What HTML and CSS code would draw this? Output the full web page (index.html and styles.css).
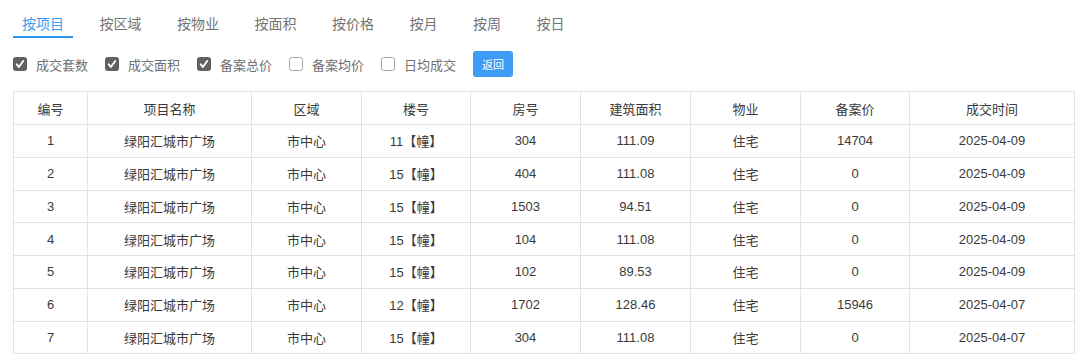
FILE: index.html
```html
<!DOCTYPE html>
<html lang="zh-CN">
<head>
  <meta charset="UTF-8">
  <meta name="viewport" content="width=device-width, initial-scale=1.0">
  <title>成交明细</title>
  <link rel="stylesheet" href="styles.css">
</head>
<body>

  <div class="page">
    <!-- 统计维度 -->
    <div class="tabs">
      <div class="tab active">按项目</div>
      <div class="tab">按区域</div>
      <div class="tab">按物业</div>
      <div class="tab">按面积</div>
      <div class="tab">按价格</div>
      <div class="tab">按月</div>
      <div class="tab">按周</div>
      <div class="tab">按日</div>
    </div>

    <!-- 指标选择 -->
    <div class="filters">
      <label class="check checked"><span class="box"><svg viewBox="0 0 14 14"><path d="M3.7 7.3l2.2 2.7 4.3-6" fill="none" stroke="#fff" stroke-width="1.9" stroke-linecap="round" stroke-linejoin="round"/></svg></span>成交套数</label>
      <label class="check checked"><span class="box"><svg viewBox="0 0 14 14"><path d="M3.7 7.3l2.2 2.7 4.3-6" fill="none" stroke="#fff" stroke-width="1.9" stroke-linecap="round" stroke-linejoin="round"/></svg></span>成交面积</label>
      <label class="check checked"><span class="box"><svg viewBox="0 0 14 14"><path d="M3.7 7.3l2.2 2.7 4.3-6" fill="none" stroke="#fff" stroke-width="1.9" stroke-linecap="round" stroke-linejoin="round"/></svg></span>备案总价</label>
      <label class="check"><span class="box"></span>备案均价</label>
      <label class="check"><span class="box"></span>日均成交</label>
      <button class="back-btn">返回</button>
    </div>

    <table class="deal-table">
      <colgroup>
        <col style="width:74px">
        <col style="width:164px">
        <col style="width:110px">
        <col style="width:109px">
        <col style="width:110px">
        <col style="width:110px">
        <col style="width:110px">
        <col style="width:109px">
        <col style="width:165px">
      </colgroup>
      <thead>
        <tr>
          <th>编号</th>
          <th>项目名称</th>
          <th>区域</th>
          <th>楼号</th>
          <th>房号</th>
          <th>建筑面积</th>
          <th>物业</th>
          <th>备案价</th>
          <th>成交时间</th>
        </tr>
      </thead>
      <tbody>
        <tr><td>1</td><td>绿阳汇城市广场</td><td>市中心</td><td>11【幢】</td><td>304</td><td>111.09</td><td>住宅</td><td>14704</td><td>2025-04-09</td></tr>
        <tr><td>2</td><td>绿阳汇城市广场</td><td>市中心</td><td>15【幢】</td><td>404</td><td>111.08</td><td>住宅</td><td>0</td><td>2025-04-09</td></tr>
        <tr><td>3</td><td>绿阳汇城市广场</td><td>市中心</td><td>15【幢】</td><td>1503</td><td>94.51</td><td>住宅</td><td>0</td><td>2025-04-09</td></tr>
        <tr><td>4</td><td>绿阳汇城市广场</td><td>市中心</td><td>15【幢】</td><td>104</td><td>111.08</td><td>住宅</td><td>0</td><td>2025-04-09</td></tr>
        <tr><td>5</td><td>绿阳汇城市广场</td><td>市中心</td><td>15【幢】</td><td>102</td><td>89.53</td><td>住宅</td><td>0</td><td>2025-04-09</td></tr>
        <tr><td>6</td><td>绿阳汇城市广场</td><td>市中心</td><td>12【幢】</td><td>1702</td><td>128.46</td><td>住宅</td><td>15946</td><td>2025-04-07</td></tr>
        <tr><td>7</td><td>绿阳汇城市广场</td><td>市中心</td><td>15【幢】</td><td>304</td><td>111.08</td><td>住宅</td><td>0</td><td>2025-04-07</td></tr>
      </tbody>
    </table>
  </div>

</body>
</html>
```

FILE: styles.css
```css
body {
  margin: 0;
  padding: 0;
  background-color: #fff;
  font-family: "Liberation Sans", "Noto Sans CJK SC", sans-serif;
  color: #333;
}

.page {
  padding: 10px 0 0 13px;
  width: 1061px;
}

/* Tabs */
.tabs {
  display: flex;
  gap: 17.5px;
}

.tab {
  padding: 0 9px;
  font-family: "Noto Sans CJK SC", sans-serif;
  font-size: 14px;
  line-height: 26px;
  color: #737373;
  border-bottom: 2px solid transparent;
}

.tab.active {
  color: #3a9cf5;
  border-bottom-color: #2f95f0;
}

/* Filters */
.filters {
  display: flex;
  align-items: center;
  height: 26px;
  margin-top: 13px;
}

.check {
  display: flex;
  align-items: center;
  margin-right: 17px;
  font-family: "Noto Sans CJK SC", sans-serif;
  font-size: 13px;
  color: #707070;
}

.check .box {
  width: 14px;
  height: 14px;
  margin-right: 9px;
  box-sizing: border-box;
  border: 1px solid #a8a8a8;
  border-radius: 3px;
  background-color: #fff;
}

.check.checked .box {
  border: none;
  background-color: #616161;
}

.check .box svg {
  display: block;
  width: 14px;
  height: 14px;
}

.back-btn {
  width: 40px;
  height: 26px;
  padding: 0;
  border: none;
  border-radius: 3px;
  background-color: #3e9cf6;
  color: #fff;
  font-family: "Noto Sans CJK SC", sans-serif;
  font-size: 11px;
  cursor: pointer;
}

/* Table */
.deal-table {
  margin-top: 14px;
  width: 1061px;
  table-layout: fixed;
  border-collapse: collapse;
  font-size: 13px;
}

.deal-table th,
.deal-table td {
  border: 1px solid #e3e3e3;
  padding: 0;
  text-align: center;
  color: #3a3a3a;
}

.deal-table th {
  height: 32px;
  font-weight: normal;
}

.deal-table td {
  height: 31.76px;
}
```
